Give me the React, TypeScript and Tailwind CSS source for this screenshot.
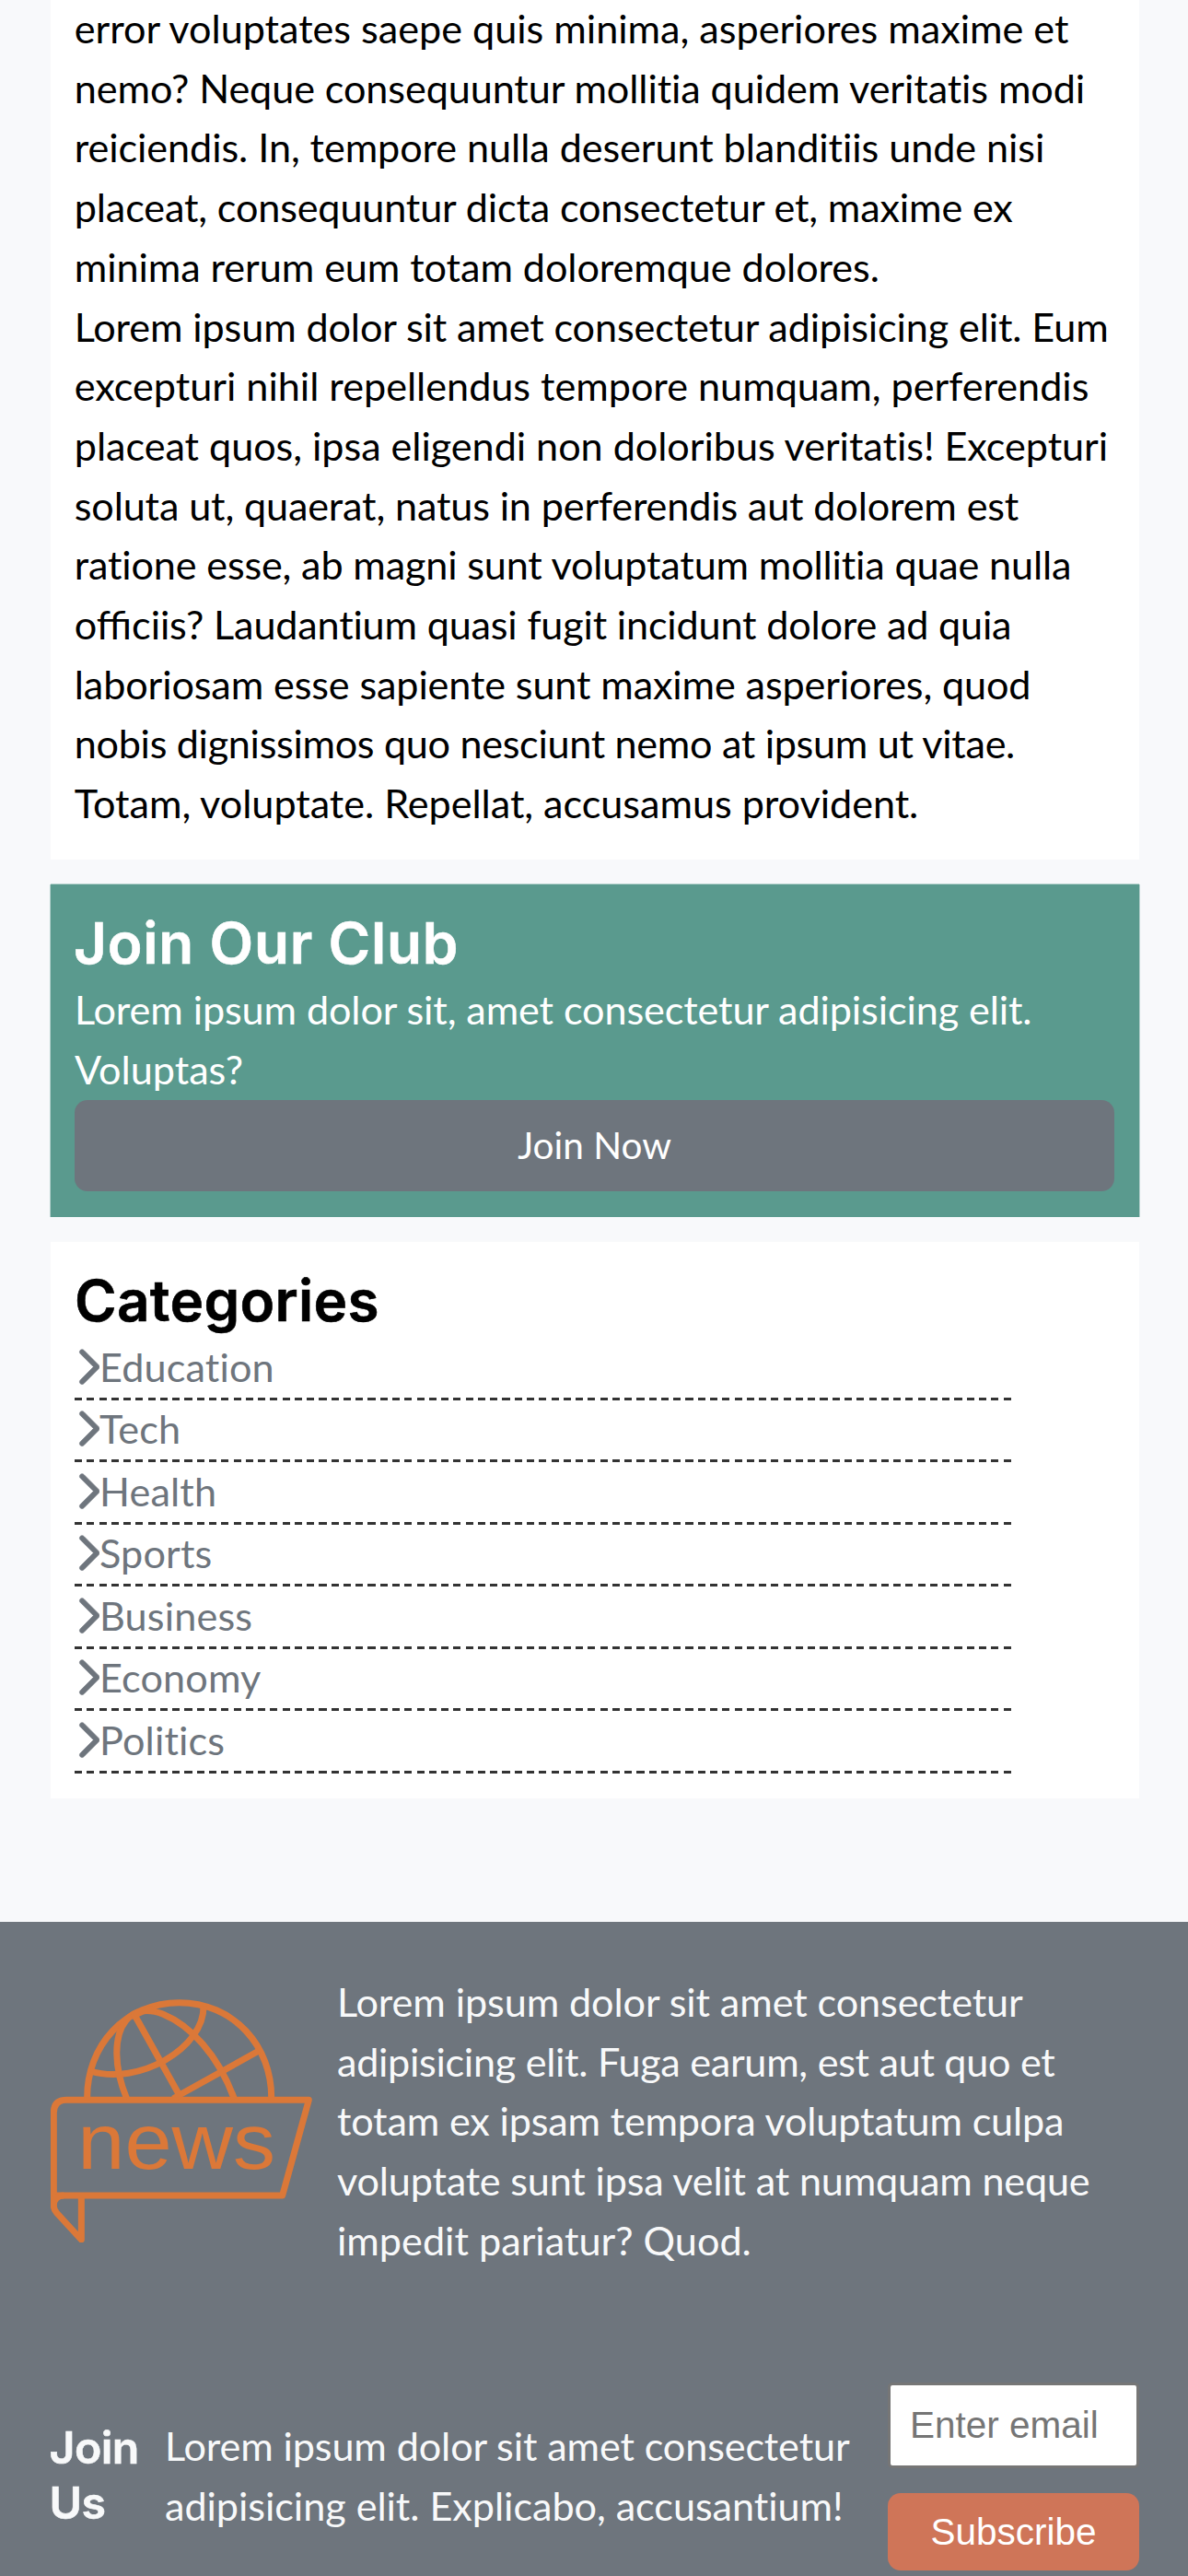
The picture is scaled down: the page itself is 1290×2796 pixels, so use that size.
import { FaChevronRight } from 'react-icons/fa6';

const categories = ['Education', 'Tech', 'Health', 'Sports', 'Business', 'Economy', 'Politics'];

function NewsLogo() {
  return (
    <svg viewBox="75 90 852 792" className="h-[264px] w-[284px] shrink-0" fill="none" stroke="#db7838" strokeWidth="21" strokeLinejoin="round">
      <path d="M85 730V460Q85 418 127 418H916L830 729H85V762Q85 775 95 786L175 873V729" />
      <path d="M85 762Q85 729 118 729" />
      <path d="M194 418C190 240 320 101 494 101C668 101 798 240 794 418" />
      <path d="M350 144L494 402L753 258M494 402L474 414" />
      <path d="M205 324C360 372 576 250 573 112" />
      <path d="M323 414C280 310 280 210 320 160C350 120 400 122 440 138C530 175 620 270 673 414" />
      <path d="M340 150C365 130 390 120 420 122" />
      <text x="163" y="641" textLength="644" lengthAdjust="spacingAndGlyphs" fontSize="253" fill="#db7838" stroke="none" fontFamily="'Liberation Sans', Arial, sans-serif">news</text>
    </svg>
  );
}

const headingFont = "font-['Inter',sans-serif] font-semibold [-webkit-text-stroke:0.6px_currentColor]";

export default function App() {
  return (
    <div className="flex h-[2796px] w-[1290px] flex-col overflow-hidden bg-[#f8f9fb] font-['Lato',sans-serif] text-[43.2px] leading-[64.7px] whitespace-nowrap text-black [font-variant-ligatures:none]">
      <main className="flex h-[2086px] shrink-0 flex-col gap-[27px] pr-[53.4px] pl-[54.6px]">
        <article className="h-[932.6px] shrink-0 bg-white px-[26.2px]">
          <div className="-mt-[2px]">
            <p>
              <span className="block tracking-[-0.02px]">error voluptates saepe quis minima, asperiores maxime et</span>
              <span className="block tracking-[-0.1px]">nemo? Neque consequuntur mollitia quidem veritatis modi</span>
              <span className="block tracking-[-0.08px]">reiciendis. In, tempore nulla deserunt blanditiis unde nisi</span>
              <span className="block tracking-[-0.155px]">placeat, consequuntur dicta consectetur et, maxime ex</span>
              <span className="block tracking-[-0.08px]">minima rerum eum totam doloremque dolores.</span>
            </p>
            <p>
              <span className="block tracking-[-0.13px]">Lorem ipsum dolor sit amet consectetur adipisicing elit. Eum</span>
              <span className="block tracking-[-0.02px]">excepturi nihil repellendus tempore numquam, perferendis</span>
              <span className="block tracking-[-0.05px]">placeat quos, ipsa eligendi non doloribus veritatis! Excepturi</span>
              <span className="block tracking-[-0.155px]">soluta ut, quaerat, natus in perferendis aut dolorem est</span>
              <span className="block tracking-[-0.17px]">ratione esse, ab magni sunt voluptatum mollitia quae nulla</span>
              <span className="block tracking-[-0.19px]"><span className="tracking-normal [font-variant-ligatures:normal]">offic</span>iis? Laudantium quasi fugit incidunt dolore ad quia</span>
              <span className="block tracking-[-0.13px]">laboriosam esse sapiente sunt maxime asperiores, quod</span>
              <span className="block tracking-[-0.32px]">nobis dignissimos quo nesciunt nemo at ipsum ut vitae.</span>
              <span className="block tracking-[-0.04px]">Totam, voluptate. Repellat, accusamus provident.</span>
            </p>
          </div>
        </article>

        <section className="h-[361px] shrink-0 bg-[#5a9a8e] px-[26.4px] pt-[25px] text-white shadow-[1px_0_0_#b4d1cd,-1px_0_0_#b4d1cd,0_-1px_0_#b4d1cd]">
          <h2 className={`${headingFont} -ml-[1px] text-[62px] leading-[77px] tracking-[0.8px]`}>Join Our Club</h2>
          <p className="pt-[1.5px]">
            <span className="block tracking-[-0.11px]">Lorem ipsum dolor sit, amet consectetur adipisicing elit.</span>
            <span className="block">Voluptas?</span>
          </p>
          <button className="mt-[1.5px] h-[99px] w-full rounded-[14px] bg-[#6e757d] pb-[2px] text-[40.5px] leading-[48px]">Join Now</button>
        </section>

        <section className="h-[604px] shrink-0 bg-white px-[26.4px] pt-[25px]">
          <h2 className={`${headingFont} text-[62px] leading-[77px] tracking-[0.3px]`}>Categories</h2>
          <ul className="w-[1017px] pt-[1.3px] text-[#6e757d]">
            {categories.map((name) => (
              <li key={name} className="flex h-[67.5px] flex-col">
                <a className="flex h-[66.5px] items-center pb-[1px] tracking-[0.15px]">
                  <FaChevronRight className="h-[43.2px] w-[27px]" stroke="currentColor" strokeWidth={8} />
                  {name}
                </a>
                <div className="h-[3px] shrink-0 bg-[repeating-linear-gradient(90deg,#333_0_8.1px,transparent_8.1px_13.27px)]" />
              </li>
            ))}
          </ul>
        </section>
      </main>

      <footer className="h-[710px] shrink-0 bg-[#6e757d] pt-[54px] pr-[53px] pl-[54.6px] text-[#f8f9fa]">
        <div className="flex items-center gap-[27.4px]">
          <NewsLogo />
          <p className="flex-1">
            <span className="block tracking-[-0.1px]">Lorem ipsum dolor sit amet consectetur</span>
            <span className="block tracking-[-0.3px]">adipisicing elit. Fuga earum, est aut quo et</span>
            <span className="block tracking-[-0.18px]">totam ex ipsam tempora voluptatum culpa</span>
            <span className="block tracking-[-0.19px]">voluptate sunt ipsa velit at numquam neque</span>
            <span className="block">impedit pariatur? Quod.</span>
          </p>
        </div>
        <div className="mt-[122px] -ml-[1px] flex items-center">
          <h3 className={`${headingFont} w-[125.4px] shrink-0 pb-[2px] text-[48.3px] leading-[60px] tracking-[-0.6px]`}>
            Join
            <br />
            Us
          </h3>
          <p className="w-[785px] shrink-0 pb-[1px]">
            <span className="block tracking-[-0.13px]">Lorem ipsum dolor sit amet consectetur</span>
            <span className="block tracking-[-0.05px]">adipisicing elit. Explicabo, accusantium!</span>
          </p>
          <form className="flex w-[273px] shrink-0 flex-col gap-[27px] font-['Liberation_Sans',Arial,sans-serif] text-[40.5px] leading-[47px]">
            <input
              type="email"
              placeholder="Enter email"
              className="h-[93px] w-full rounded-[5px] border-[3px] border-[#767676] bg-white px-[21px] placeholder:text-[#757575] placeholder:opacity-100"
            />
            <button type="button" className="h-[84px] rounded-[14px] bg-[#cf7558] pt-[2px] text-white">Subscribe</button>
          </form>
        </div>
      </footer>
    </div>
  );
}
